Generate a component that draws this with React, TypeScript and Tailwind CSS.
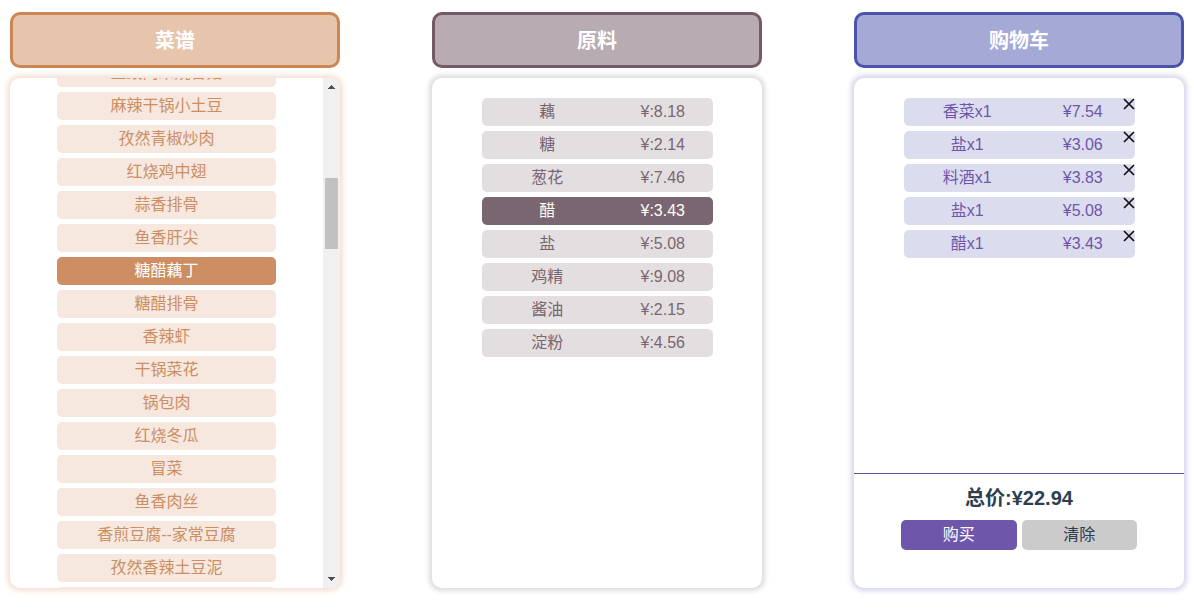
import { useLayoutEffect, useRef, type ReactNode } from "react";

const recipes = [
  "豆豉肉末烧香菇",
  "麻辣干锅小土豆",
  "孜然青椒炒肉",
  "红烧鸡中翅",
  "蒜香排骨",
  "鱼香肝尖",
  "糖醋藕丁",
  "糖醋排骨",
  "香辣虾",
  "干锅菜花",
  "锅包肉",
  "红烧冬瓜",
  "冒菜",
  "鱼香肉丝",
  "香煎豆腐--家常豆腐",
  "孜然香辣土豆泥",
  "清炒土豆丝",
];

const ingredients = [
  ["藕", "8.18"],
  ["糖", "2.14"],
  ["葱花", "7.46"],
  ["醋", "3.43"],
  ["盐", "5.08"],
  ["鸡精", "9.08"],
  ["酱油", "2.15"],
  ["淀粉", "4.56"],
];

const cart = [
  ["香菜", "7.54"],
  ["盐", "3.06"],
  ["料酒", "3.83"],
  ["盐", "5.08"],
  ["醋", "3.43"],
];

function Column({
  title,
  heading,
  panel,
  children,
}: {
  title: string;
  heading: string;
  panel: string;
  children: ReactNode;
}) {
  return (
    <section className="flex w-[330px] flex-col gap-2.5">
      <h2
        className={`flex h-14 items-center justify-center rounded-[10px] border-3 pt-0.5 text-xl font-bold text-white ${heading}`}
      >
        {title}
      </h2>
      <div className={`flex h-[510px] overflow-hidden rounded-[10px] ${panel}`}>{children}</div>
    </section>
  );
}

function Recipes() {
  const list = useRef<HTMLUListElement>(null);
  useLayoutEffect(() => {
    if (list.current) list.current.scrollTop = 39;
  }, []);
  return (
    <>
      <ul
        ref={list}
        className="flex min-w-0 flex-1 flex-col items-center gap-[5px] overflow-y-auto py-5 [scrollbar-width:none]"
      >
        {recipes.map((name) => (
          <li key={name} className="w-[70%] shrink-0">
            <button
              type="button"
              className={`block h-7 w-full rounded-[5px] text-center leading-7 ${
                name === "糖醋藕丁" ? "bg-[#cc8e62] text-white" : "bg-[#f6e8df] text-[#cc8e62]"
              }`}
            >
              {name}
            </button>
          </li>
        ))}
      </ul>
      <div aria-hidden="true" className="flex w-[17px] flex-col items-center bg-[#f0f0f0] py-[7px]">
        <svg width="7" height="4" viewBox="0 0 7 4" fill="#505050" shapeRendering="crispEdges">
          <path d="M3 0h1v1h1v1h1v1h1v1H0V3h1V2h1V1h1z" />
        </svg>
        <div className="mt-[89px] h-[71px] w-[13px] bg-[#c1c1c1]" />
        <svg
          className="mt-auto"
          width="7"
          height="4"
          viewBox="0 0 7 4"
          fill="#505050"
          shapeRendering="crispEdges"
        >
          <path d="M0 0h7v1H6v1H5v1H4v1H3V3H2V2H1V1H0z" />
        </svg>
      </div>
    </>
  );
}

function Ingredients() {
  return (
    <ul className="flex flex-1 flex-col items-center gap-[5px] py-5">
      {ingredients.map(([name, price]) => (
        <li key={name} className="w-[70%]">
          <button
            type="button"
            className={`grid h-7 w-full grid-cols-2 rounded-[5px] text-center leading-7 ${
              name === "醋" ? "bg-[#7a6670] text-white" : "bg-[#e3dfe0] text-[#7a6670]"
            }`}
          >
            <span className="pl-4">{name}</span>
            <span className="pl-4">¥:{price}</span>
          </button>
        </li>
      ))}
    </ul>
  );
}

function Cart() {
  return (
    <div className="flex flex-1 flex-col">
      <ul className="flex flex-1 flex-col items-center gap-[5px] pt-5">
        {cart.map(([name, price], i) => (
          <li
            key={i}
            className="relative grid h-7 w-[70%] grid-cols-2 rounded-[5px] bg-[#dbdcee] text-center leading-7 text-[#6e56ab]"
          >
            <span className="pl-3">{name}x1</span>
            <span className="pl-3">¥{price}</span>
            <button type="button" aria-label={`移除${name}`} className="absolute top-0 right-0">
              <svg width="12" height="12" viewBox="0 0 12 12" fill="none" stroke="#111" strokeWidth="1.7">
                <path d="M1 1l10 10M11 1L1 11" />
              </svg>
            </button>
          </li>
        ))}
      </ul>
      <div className="flex h-[115px] flex-col items-center border-t border-[#55569b] pt-2.5 text-[#2c3e50]">
        <p className="text-xl leading-7 font-bold">总价:¥22.94</p>
        <div className="mt-2 flex w-full justify-center gap-[5px]">
          <button type="button" className="h-[30px] w-[35%] rounded-[5px] bg-[#6e56ab] text-white">
            购买
          </button>
          <button type="button" className="h-[30px] w-[35%] rounded-[5px] bg-[#cbcbcb]">
            清除
          </button>
        </div>
      </div>
    </div>
  );
}

export default function App() {
  return (
    <main className="flex justify-between bg-white px-2.5 pt-3 pb-5 font-['Liberation_Sans','Noto_Sans_CJK_SC',sans-serif] text-base">
      <Column
        title="菜谱"
        heading="border-[#cb8654] bg-[#e7c4ac]"
        panel="shadow-[0_0_5px_3px_#f5e1d5]"
      >
        <Recipes />
      </Column>
      <Column
        title="原料"
        heading="border-[#735a66] bg-[#b8abb1]"
        panel="shadow-[0_0_5px_3px_#dedadb]"
      >
        <Ingredients />
      </Column>
      <Column
        title="购物车"
        heading="border-[#4a53ab] bg-[#a5a9d5]"
        panel="shadow-[0_0_5px_3px_#d6d7eb]"
      >
        <Cart />
      </Column>
    </main>
  );
}
